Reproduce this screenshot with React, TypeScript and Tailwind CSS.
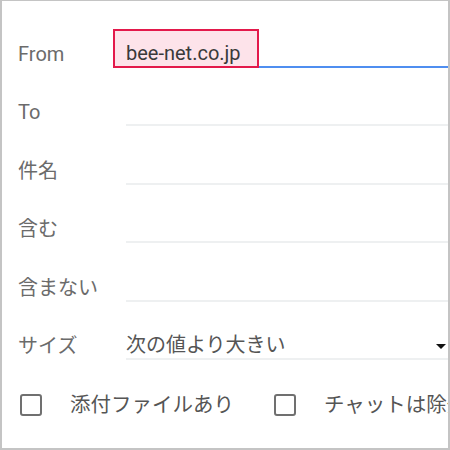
const font = { fontFamily: 'Roboto, "Noto Sans CJK JP", sans-serif' };

function Row({ label, children, line = "border-[#eef0f1]" }: { label: string; children?: React.ReactNode; line?: string }) {
  return (
    <div className="flex h-[58.5px] items-end">
      <div className="flex h-[28px] w-[108px] shrink-0 items-center text-[20px] text-[#6b6b6b]">{label}</div>
      <div className={`relative flex h-[28px] flex-1 items-center border-b-2 ${line}`}>{children}</div>
    </div>
  );
}

function Checkbox({ label }: { label: string }) {
  return (
    <div className="flex shrink-0 items-center">
      <div className="h-[22px] w-[22px] shrink-0 rounded-[3px] border-[2.5px] border-[#707070]" />
      <span className="ml-[28px] whitespace-nowrap text-[20.5px] text-[#555]">{label}</span>
    </div>
  );
}

export default function App() {
  return (
    <div
      className="h-[450px] w-[450px] overflow-hidden border-b-2 border-l-2 border-r-2 border-t border-[#c4c4c4] bg-white"
      style={font}
    >
      <div className="relative pl-[16px] pt-[8px]">
        <Row label="From" line="border-[#4f8ef0]">
          <div className="absolute left-[-13px] top-[-11px] h-[39px] w-[146px] border-2 border-[#e3194b] bg-[#fde3ea]" />
          <span className="relative text-[20px] text-[#3a3a3a]">bee-net.co.jp</span>
        </Row>
        <Row label="To" />
        <Row label="件名" />
        <Row label="含む" />
        <Row label="含まない" />
        <Row label="サイズ">
          <span className="text-[20px] text-[#555]">次の値より大きい</span>
          <svg className="absolute right-[2px] top-[12px]" width="10" height="6" viewBox="0 0 10 6">
            <path d="M0 0h10L5 5z" fill="#111" />
          </svg>
        </Row>
        <div className="mt-[30px] flex gap-[40px] overflow-hidden pl-[2px]">
          <Checkbox label="添付ファイルあり" />
          <Checkbox label="チャットは除外" />
        </div>
      </div>
    </div>
  );
}
